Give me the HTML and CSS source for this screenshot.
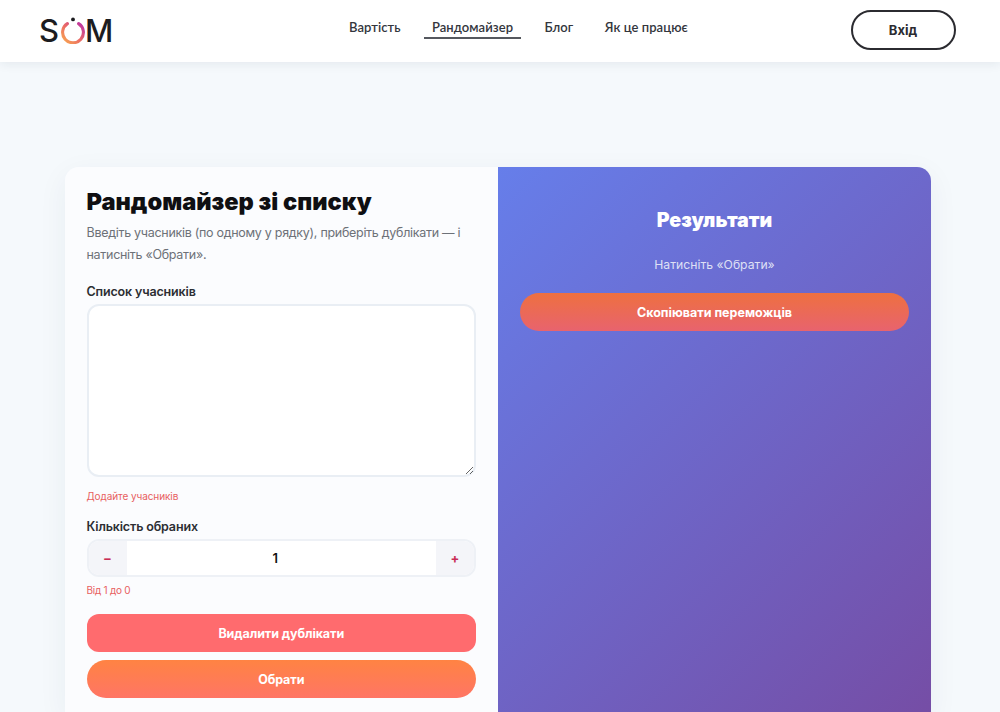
FILE: index.html
```html
<!DOCTYPE html>
<html lang="uk">
<head>
<meta charset="utf-8">
<title>Рандомайзер зі списку</title>
<link rel="stylesheet" href="styles.css">
</head>
<body>
<header class="site-header">
  <a class="logo" href="#">
    <span>S</span>
    <svg class="logo-o" width="26" height="28" viewBox="0 0 26 28" aria-hidden="true">
      <defs>
        <linearGradient id="ring" x1="0" y1="1" x2="1" y2="0">
          <stop offset="0" stop-color="#f9a94f"/>
          <stop offset="0.5" stop-color="#ea6a66"/>
          <stop offset="1" stop-color="#b92fa8"/>
        </linearGradient>
      </defs>
      <path d="M7.4 7.6 A10.4 10.4 0 1 0 18.6 7.6" fill="none" stroke="url(#ring)" stroke-width="3.1" stroke-linecap="round"/>
      <circle cx="13" cy="3.4" r="1.9" fill="#1c1c20"/>
    </svg>
    <span>M</span>
  </a>
  <nav class="nav">
    <a class="nav-link" href="#">Вартість</a>
    <a class="nav-link active" href="#">Рандомайзер</a>
    <a class="nav-link" href="#">Блог</a>
    <a class="nav-link" href="#">Як це працює</a>
  </nav>
  <button class="login">Вхід</button>
</header>
<main class="page">
  <section class="card">
    <div class="panel-left">
      <h1 class="title">Рандомайзер зі списку</h1>
      <p class="lead">Введіть учасників (по одному у рядку), приберіть дублікати — і натисніть «Обрати».</p>
      <label class="label" for="list">Список учасників</label>
      <textarea class="area" id="list"></textarea>
      <p class="hint hint-area">Додайте учасників</p>
      <label class="label label-count">Кількість обраних</label>
      <div class="stepper">
        <button class="step">−</button>
        <div class="step-value">1</div>
        <button class="step">+</button>
      </div>
      <p class="hint hint-step">Від 1 до 0</p>
      <button class="btn btn-red">Видалити дублікати</button>
      <button class="btn btn-orange">Обрати</button>
    </div>
    <div class="panel-right">
      <h2 class="result-title">Результати</h2>
      <p class="result-note">Натисніть «Обрати»</p>
      <button class="btn btn-copy">Скопіювати переможців</button>
    </div>
  </section>
</main>
</body>
</html>
```
FILE: styles.css
```css
* { box-sizing: border-box; }
html, body { margin: 0; height: 712px; overflow: hidden; }
body {
  background: #f5f9fc;
  font-family: Inter, "Noto Sans", sans-serif;
  color: #1b1b1f;
}
.site-header {
  height: 62px;
  background: #fff;
  box-shadow: 0 2px 10px rgba(30, 40, 70, 0.08);
  display: flex;
  align-items: center;
  padding: 0 44.5px 0 39px;
  position: relative;
}
.logo {
  display: flex;
  align-items: center;
  text-decoration: none;
  color: #1c1c20;
  font: 500 31px/1 Inter, sans-serif;
  width: 302px;
  height: 34px;
  margin-top: -2px;
}
.logo-o { margin: 0 -0.5px 0 0.5px; }
.nav { display: flex; gap: 15.5px; align-items: flex-start; margin-top: -6px; }
.nav-link {
  font: 600 13px/18px Lato, "Noto Sans", sans-serif;
  color: #33363d;
  text-decoration: none;
  padding: 0 8px 1px;
  letter-spacing: 0.05px;
  border-bottom: 2px solid transparent;
}
.nav-link.active { border-bottom-color: #55585e; }
.login {
  margin-left: auto;
  margin-top: -2px;
  width: 105px;
  height: 40px;
  border-radius: 20px;
  border: 2px solid #2b2b30;
  background: #fff;
  font: 700 13px Inter, sans-serif;
  color: #2b2b30;
}
.page { padding: 105px 69px 0 65px; }
.card {
  display: grid;
  grid-template-columns: 433px 433px;
  border-radius: 14px 14px 0 0;
  overflow: hidden;
  box-shadow: 0 8px 30px rgba(40, 50, 90, 0.06);
  height: 545px;
}
.panel-left { background: #fbfcfe; padding: 20px 22px 0 21.5px; }
.title {
  margin: 0;
  font: 900 23.6px/30px Inter, "Noto Sans", sans-serif;
  color: #0f0f12;
}
.lead {
  margin: 5px 0 0;
  font: 400 12.5px/22px Inter, sans-serif;
  color: #6d7178;
  letter-spacing: -0.29px;
}
.label {
  display: block;
  margin-top: 17px;
  font: 600 12.5px/18px Inter, sans-serif;
  letter-spacing: -0.15px;
  color: #2c2e33;
}
.area {
  display: block;
  width: 100%;
  height: 173px;
  margin-top: 3px;
  border: 2px solid #e9eef4;
  border-radius: 12px;
  background: #fff;
}
.hint {
  margin: 0;
  font: 400 10px/14px Inter, sans-serif;
  letter-spacing: -0.08px;
  color: #e8605f;
}
.hint-area { margin-top: 12px; }
.label-count { margin-top: 15px; }
.stepper {
  display: flex;
  height: 38px;
  margin-top: 3px;
  border: 2px solid #eef1f6;
  border-radius: 12px;
  overflow: hidden;
  background: #fff;
}
.step {
  width: 38px;
  border: 0;
  background: #f4f5f9;
  color: #c92c55;
  font: 700 13px Inter, sans-serif;
  padding: 0;
}
.step-value {
  flex: 1;
  padding-right: 12px;
  text-align: center;
  font: 600 13px/34px Inter, sans-serif;
  color: #111;
}
.hint-step { margin-top: 6px; letter-spacing: -0.25px; }
.btn {
  display: block;
  width: 100%;
  height: 38px;
  border: 0;
  color: #fff;
  font: 700 12.5px Inter, sans-serif;
}
.btn-red {
  margin-top: 17px;
  border-radius: 12px;
  background: #ff6b6e;
  letter-spacing: -0.1px;
}
.btn-orange {
  margin-top: 8px;
  border-radius: 19px;
  background: linear-gradient(180deg, #ff8343, #ff7565);
  letter-spacing: -0.1px;
}
.panel-right {
  background: linear-gradient(135deg, #667eea, #764ba2 105%);
  padding: 0 22px;
  text-align: center;
}
.result-title {
  margin: 39px 0 0;
  font: 900 19.6px/28px Inter, sans-serif;
  color: #fff;
}
.result-note {
  margin: 22px 0 0;
  font: 400 12.2px/18px Inter, sans-serif;
  color: #dfe0f5;
}
.btn-copy {
  margin-top: 19px;
  border-radius: 19px;
  background: linear-gradient(180deg, #ee7040, #e8636e);
}
```
